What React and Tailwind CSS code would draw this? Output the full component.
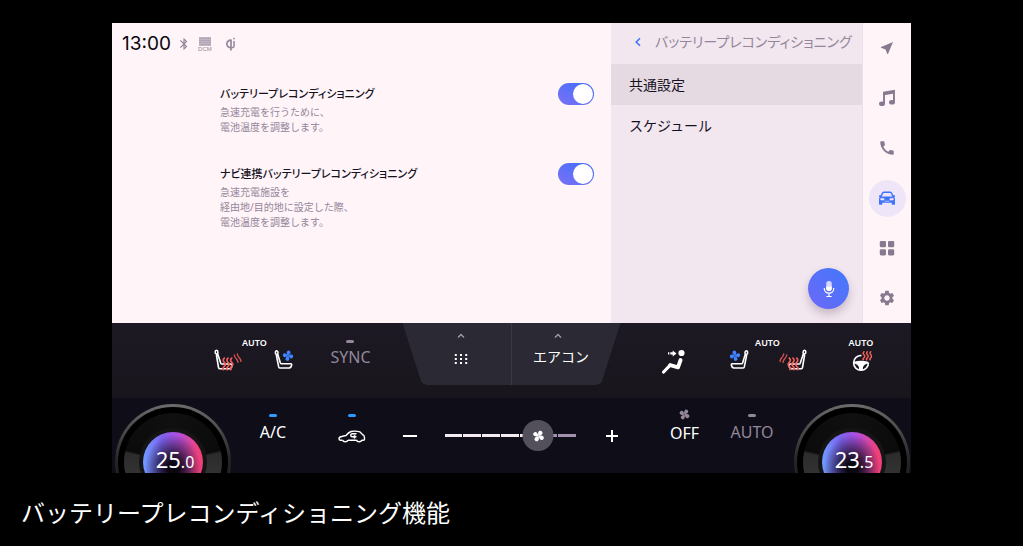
import React, { useState } from "react";
import { MdBluetooth, MdNearMe, MdCall, MdSettings } from "react-icons/md";

const JP = "font-['Noto_Sans','Noto_Sans_CJK_JP',sans-serif]";

function QiIcon() {
  return (
    <svg viewBox="0 0 12 16" className="h-4 w-3" fill="none" stroke="currentColor" aria-hidden="true">
      <path d="M6.600 4.400A3.700 3.700 0 1 0 6.800 11.400M6 4v10.500" strokeWidth="1.700" />
      <path d="M9 5v5.500c0 .6-.8 1-2 1.200" strokeWidth="1.500" />
      <circle cx="9" cy="2.600" r="0.900" fill="currentColor" stroke="none" />
    </svg>
  );
}

function SignalIcon() {
  return (
    <span className="flex w-3 flex-col items-center">
      <svg viewBox="0 0 12 9" className="h-[9px] w-3" aria-hidden="true">
        <rect width="12" height="9" fill="#c3b6c4" />
        <path d="M0 1.500h12M0 3.500h12M0 5.500h12M0 7.500h12" stroke="#aa9bad" strokeWidth="0.600" />
      </svg>
      <span className="font-['Liberation_Sans',sans-serif] text-[6px] leading-[6px] text-[#94869b]">DCM</span>
    </span>
  );
}

function MusicIcon() {
  return (
    <svg viewBox="0 0 18 18" className="size-[18px]" fill="none" aria-hidden="true">
      <path d="M6 14.500V3.500l10-1.700v11" stroke="currentColor" strokeWidth="1.900" />
      <path d="M6 5.200 16 3.500" stroke="currentColor" strokeWidth="2.200" />
      <ellipse cx="4" cy="14.800" rx="3" ry="2.300" fill="currentColor" />
      <ellipse cx="14" cy="13.200" rx="3" ry="2.300" fill="currentColor" />
    </svg>
  );
}

function CarFrontIcon() {
  return (
    <svg viewBox="0 0 18 16" className="h-4 w-[18px]" aria-hidden="true">
      <path d="M3 6.800 4.300 3.400Q4.700 2.300 5.900 2.200h6.200q1.200.1 1.600 1.200L15 6.800" fill="none" stroke="currentColor" strokeWidth="1.400" />
      <path d="M1 5.200h2v1.400h12V5.200h2v1.300l-.8.400q.8.900.8 2.100V14q0 .8-.8.800h-1.700q-.8 0-.8-.8v-1.200H4.300V14q0 .8-.8.800H1.800Q1 14.800 1 14V9q0-1.200.8-2.100L1 6.500z" fill="currentColor" />
      <path d="M2.800 8.400h2.900l.5 1.600H2.800zM15.200 8.400h-2.900l-.5 1.600h3.400zM6.400 11.200h5.200" fill="#efe5f8" stroke="#efe5f8" strokeWidth="0.600" />
    </svg>
  );
}

function GridIcon() {
  return (
    <svg viewBox="0 0 16 16" className="size-4" fill="currentColor" aria-hidden="true">
      <rect x="0.800" y="1" width="6.200" height="6.200" rx="1.300" />
      <rect x="9" y="1" width="6.200" height="6.200" rx="1.300" />
      <rect x="0.800" y="9.200" width="6.200" height="6.200" rx="1.300" />
      <rect x="9" y="9.200" width="6.200" height="6.200" rx="1.300" />
    </svg>
  );
}

function MicIcon() {
  return (
    <svg viewBox="0 0 12 18" className="h-[18px] w-3" aria-hidden="true">
      <rect x="3.200" y="1" width="5.600" height="10" rx="2.700" fill="#d6d6ff" />
      <path d="M3.200 6.500h5.600v1.800a2.800 2.800 0 0 1-5.600 0z" fill="#fff" />
      <path d="M1.300 8v.8A4.600 4.600 0 0 0 6 13.200a4.600 4.600 0 0 0 4.700-4.400V8M6 13v3.300M3.300 16.500h5.400" fill="none" stroke="#fff" strokeWidth="1.200" />
    </svg>
  );
}

function FanShapes() {
  const d = "M10 10C7.500 8.800 4.600 6.500 4.900 3.400 5.300.6 8.600-.2 10.900 1.300 13 2.900 12 6.500 10 10z";
  return (
    <>
      <path d={d} />
      <path d={d} transform="rotate(90 10 10)" />
      <path d={d} transform="rotate(180 10 10)" />
      <path d={d} transform="rotate(270 10 10)" />
    </>
  );
}

function FanBlades({ className }) {
  return (
    <svg viewBox="0 0 20 20" className={className} fill="currentColor" aria-hidden="true">
      <g transform="rotate(45 10 10)">
        <FanShapes />
      </g>
    </svg>
  );
}

function SeatHeat({ flip }) {
  return (
    <svg viewBox="0 0 28 26" className="h-[26px] w-7" fill="none" aria-hidden="true">
      <g transform={flip ? "translate(28 0) scale(-1 1)" : undefined} strokeLinecap="round" strokeLinejoin="round">
        <path d="M2.500 6Q1 5.500 1.200 4q-.1-1.600 1.200-1.700Q3.900 2.400 3.900 4.200L3.700 6l3.100 9.300q.3.700 1 .7h8.800q1.500.2 1.500 1.600-.2 2.300-2.300 3.200H6.200q-1.400 0-1.700-1.300L2.500 7.500z" stroke="#fff" strokeWidth="1.600" />
        <path d="M10.300 10.200q-2.200 2.100 0 4.100t0 4.100-.8 3.300M14 10.200q-2.200 2.100 0 4.100t0 4.100-.8 3.300M17.700 10.200q-2.200 2.100 0 4.100t0 4.100-.8 3.300" stroke="#f2605c" strokeWidth="1.700" />
        <path d="M20.300 7q.4 2.400 2 3.700 1.400 1.500 1.700 3.700M23.300 6q.4 2.400 2 3.700 1.400 1.500 1.700 3.700" stroke="#d8504f" strokeWidth="1.400" />
      </g>
    </svg>
  );
}

function SeatFan({ flip }) {
  return (
    <svg viewBox="0 0 20 22" className="h-[22px] w-5" fill="none" aria-hidden="true">
      <g transform={flip ? "translate(20 0) scale(-1 1)" : undefined}>
        <path d="M2.500 6.500Q1.200 6 1.400 4.500q-.1-1.700 1.100-1.800Q4 2.800 4 4.500L3.800 6.500l2.600 8.500q.3.700 1 .7H17q.8.300.7 1.300-.5 2.500-2.300 3H6.200Q5.100 20 4.700 18.900L2.500 8z" stroke="#fff" strokeWidth="1.600" strokeLinejoin="round" />
        <g transform="translate(8.600 2.400) scale(.54) rotate(25 10 10)" fill="#3e83ff">
          <FanShapes />
        </g>
      </g>
    </svg>
  );
}

function AirflowIcon() {
  return (
    <svg viewBox="0 0 26 26" className="size-[26px]" fill="#fff" aria-hidden="true">
      <circle cx="20.500" cy="5" r="3.100" />
      <path d="M9.300 4.300h2.400V2.400l3.800 3-3.800 3V6.600H9.300zM7 4.300h1.300v2.300H7z" />
      <path d="M19.600 12 17 19.300 9.200 17.200" fill="none" stroke="#fff" strokeWidth="3.900" strokeLinejoin="round" strokeLinecap="round" />
      <path d="M9.200 17.200 2.600 24" fill="none" stroke="#fff" strokeWidth="3.200" strokeLinecap="round" />
    </svg>
  );
}

function WheelHeat() {
  return (
    <svg viewBox="0 0 22 24" className="h-6 w-[22px]" fill="none" aria-hidden="true">
      <path d="M11.500 7.500A7.400 7.400 0 1 0 18.400 14.500" stroke="#fff" strokeWidth="1.600" />
      <path d="M3.600 13.800q7.300-2.300 14.700 0l-.3 1.800q-3.900.5-5 3.600l-.3 3H9.200l-.3-3q-1.100-3.100-5-3.600z" fill="#fff" />
      <path d="M14 3.800q-1.600 1.600 0 3t0 3-.6 2M17.400 3.800q-1.600 1.600 0 3t0 3-.6 2M20.800 3.800q-1.600 1.600 0 3t0 3-.6 2" stroke="#f2605c" strokeWidth="1.500" strokeLinecap="round" />
    </svg>
  );
}

function RecirculateIcon() {
  return (
    <svg viewBox="0 0 28 14" className="h-[14px] w-7" fill="none" stroke="#fff" strokeWidth="1.400" strokeLinejoin="round" aria-hidden="true">
      <path d="M4.500 11.200H2.200Q1 11 1 9.500 1 7.800 4.500 7.200l3.500-.7q2.400-3 5-4 4.500-1 9 .4l3 3q1.500.7 1.500 2.800v1.700q-.3.800-1.500.8h-1.300M10 11.200h8.500" />
      <path d="M4.600 11a2.700 2.100 0 0 0 5.300 0M18.500 11a2.700 2.100 0 0 0 5.300 0" strokeWidth="1.400" />
      <path d="M18.500 4.700h-4.400q-1.400.2-1.400 1.500t1.400 1.600h3" />
      <path d="m16 6 2.600 1.800L16 9.600z" fill="#fff" strokeWidth="0.500" />
    </svg>
  );
}

function ChevronUp() {
  return (
    <svg viewBox="0 0 8 6" className="h-1.5 w-2" fill="none" stroke="#a99ab0" strokeWidth="1.300" aria-hidden="true">
      <path d="M1 4.500 4 1.500 7 4.500" />
    </svg>
  );
}

function Setting({ id, title, lines }) {
  const [on, setOn] = useState(true);
  return (
    <div className="flex items-start justify-between">
      <div>
        <label htmlFor={id} className="block text-[11px] leading-[22px] font-medium whitespace-nowrap text-[#15121f] [font-feature-settings:'palt']">
          {title}
        </label>
        <p className="text-[10px] leading-[15px] text-[#94869b]">
          {lines.map((line) => (
            <span key={line} className="block">{line}</span>
          ))}
        </p>
      </div>
      <input
        id={id}
        type="checkbox"
        role="switch"
        checked={on}
        onChange={() => setOn(!on)}
        className="flex h-[22px] w-9 cursor-pointer appearance-none rounded-full bg-[#b9afbd] p-px before:size-5 before:rounded-full before:bg-white checked:justify-end checked:bg-linear-to-tr checked:from-[#7a70f4] checked:to-[#356ffc]"
      />
    </div>
  );
}

const RAIL = [
  { label: "ナビ", icon: <MdNearMe className="size-4" /> },
  { label: "オーディオ", icon: <MusicIcon /> },
  { label: "電話", icon: <MdCall className="size-[18px]" /> },
  { label: "車両", icon: <CarFrontIcon />, active: true },
  { label: "アプリ", icon: <GridIcon /> },
  { label: "設定", icon: <MdSettings className="size-[18px]" /> },
];

function Display() {
  return (
    <div className="flex h-[300px] bg-[#fff4f7]">
      <main className="min-w-0 flex-1">
        <div className="mt-3 flex h-[18px] items-center pl-2.5 text-[#94869b]">
          <time className="font-['Inter',sans-serif] text-[19px] leading-[18px] text-[#08060f]">13:00</time>
          <span className="ml-1.5 flex items-center gap-2">
            <MdBluetooth className="size-[14px]" />
            <SignalIcon />
            <span className="ml-1.5"><QiIcon /></span>
          </span>
        </div>
        <div className="mt-[30px] flex flex-col gap-7 pr-[17px] pl-[108px]">
          <Setting id="battery" title="バッテリープレコンディショニング" lines={["急速充電を行うために、", "電池温度を調整します。"]} />
          <Setting id="navi" title="ナビ連携バッテリープレコンディショニング" lines={["急速充電施設を", "経由地/目的地に設定した際、", "電池温度を調整します。"]} />
        </div>
      </main>
      <aside className="flex w-[251px] flex-col bg-[#f2e6ef]">
        <header className="flex h-[41px] items-center gap-3 pb-1 pl-[22px]">
          <button type="button" aria-label="戻る" className="flex size-[10px] items-center justify-center text-[#3f74fb]">
            <svg viewBox="0 0 8 10" className="h-2.5 w-2" fill="none" stroke="currentColor" strokeWidth="1.600" aria-hidden="true">
              <path d="M6 1.200 2.200 5 6 8.800" />
            </svg>
          </button>
          <h1 className="text-[14px] leading-5 whitespace-nowrap text-[#94869b] [font-feature-settings:'palt']">バッテリープレコンディショニング</h1>
        </header>
        <nav className="flex flex-col text-[14px] leading-5 text-[#15121f]">
          <button type="button" aria-current="page" className="h-[41px] bg-[#e5d9e2] pl-[18px] text-left">共通設定</button>
          <button type="button" className="h-[41px] pl-[18px] text-left">スケジュール</button>
        </nav>
        <button type="button" aria-label="音声操作" className="mt-auto mr-[13px] mb-[14px] flex size-[41px] items-center justify-center self-end rounded-full bg-linear-to-tr from-[#6a68f8] to-[#3f78fb] shadow-[0_5px_8px_rgba(90,70,90,0.28)]">
          <MicIcon />
        </button>
      </aside>
      <nav className="grid w-[49px] grid-rows-6 border-l border-[#ece0ea] text-[#877a90]">
        {RAIL.map((item) => (
          <button
            key={item.label}
            type="button"
            aria-label={item.label}
            className={item.active ? "flex size-[37px] items-center justify-center place-self-center rounded-full bg-[#efe5f8] text-[#3f74fb]" : "flex size-[37px] items-center justify-center place-self-center"}
          >
            {item.icon}
          </button>
        ))}
      </nav>
    </div>
  );
}

function AutoLabel() {
  return <span className="text-[9px] leading-[10px] font-semibold text-white">AUTO</span>;
}

function ClimateTabs() {
  return (
    <div className="grid h-[62px] grid-cols-2 bg-[#2b2934] [clip-path:polygon(0_0,100%_0,91.500%_94%,90.500%_98%,88.500%_100%,11.500%_100%,9.500%_98%,8.500%_94%)]">
      <button type="button" aria-label="メニュー" className="flex flex-col items-center border-r border-[#3b3845] pt-2.5 pl-2">
        <ChevronUp />
        <svg viewBox="0 0 14 10" className="mt-[15px] h-2.5 w-[14px]" fill="#fff" aria-hidden="true">
          <path d="M.8 0h2v2h-2zM6 0h2v2H6zM11.200 0h2v2h-2zM.8 4h2v2h-2zM6 4h2v2H6zM11.200 4h2v2h-2zM.8 8h2v2h-2zM6 8h2v2H6zM11.200 8h2v2h-2z" />
        </svg>
      </button>
      <button type="button" className="flex flex-col items-center pt-2.5 pr-4 text-white">
        <ChevronUp />
        <span className="mt-2 pl-1.5 text-[14px] leading-5">エアコン</span>
      </button>
    </div>
  );
}

function UpperControls() {
  return (
    <div className="grid h-[75px] grid-cols-[1fr_218px_1fr] bg-linear-to-b from-[#1c1924] to-[#18151c]">
      <div className="flex items-start justify-end gap-9 pt-[15px] pr-8">
        <div className="flex w-20 flex-col items-center">
          <AutoLabel />
          <div className="flex w-full items-start justify-between">
            <button type="button" aria-label="運転席シートヒーター"><SeatHeat /></button>
            <button type="button" aria-label="運転席ベンチレーション"><SeatFan /></button>
          </div>
        </div>
        <button type="button" className="flex flex-col items-center text-[#94869b]">
          <span className="mt-0.5 h-[3px] w-2 rounded-full bg-[#94869b]" />
          <span className="mt-1 text-[16px] leading-5">SYNC</span>
        </button>
      </div>
      <ClimateTabs />
      <div className="flex items-start gap-[42px] pt-[15px] pl-10">
        <button type="button" aria-label="送風モード" className="mt-2.5"><AirflowIcon /></button>
        <div className="flex w-[78px] flex-col items-center">
          <AutoLabel />
          <div className="flex w-full items-start justify-between">
            <button type="button" aria-label="助手席ベンチレーション"><SeatFan flip /></button>
            <button type="button" aria-label="助手席シートヒーター"><SeatHeat flip /></button>
          </div>
        </div>
        <button type="button" aria-label="ステアリングヒーター AUTO" className="flex flex-col items-center">
          <AutoLabel />
          <WheelHeat />
        </button>
      </div>
    </div>
  );
}

function Dial({ whole, tenth }) {
  return (
    <div className="h-[69px] w-[116px] shrink-0 self-end overflow-hidden">
      <div className="flex size-[116px] items-center justify-center rounded-full bg-linear-to-b from-[#6c6c6c] via-[#242424] to-[#1c1c1c] p-[3px]">
        <div className="flex size-full items-center justify-center rounded-full bg-black p-[6px]">
          <div className="flex size-full items-center justify-center rounded-full bg-[conic-gradient(from_0deg,#101010_0deg,#0b0b0b_76deg,#2c2c2c_79deg,#333_110deg,#333_250deg,#2c2c2c_281deg,#0b0b0b_284deg,#101010_360deg)]">
            <div className="flex size-[68px] items-center justify-center rounded-full bg-[#151515] p-1">
              <div className="flex size-full items-start justify-center rounded-full bg-[radial-gradient(ellipse_at_50%_62%,#0b0710_12%,rgba(11,7,16,0.700)_30%,transparent_66%),linear-gradient(90deg,#6f9cff_0%,#7d62f0_32%,#b04fe0_58%,#f0407c_92%)] pt-4 pl-1">
                <output className="flex items-baseline text-[22px] leading-[22px] text-white">
                  {whole}
                  <span className="text-[16px] leading-[18px]">.{tenth}</span>
                </output>
              </div>
            </div>
          </div>
        </div>
      </div>
    </div>
  );
}

function FanSlider() {
  const [level, setLevel] = useState(5);
  const pct = (level / 7) * 100;
  return (
    <div className="relative flex h-[31px] w-[131px] items-center">
      <div className="grid w-full grid-cols-7 gap-px">
        {[1, 2, 3, 4, 5, 6, 7].map((n) => (
          <span key={n} className={n <= level ? "h-[3px] bg-[#f4ebf1]" : "h-[3px] bg-[#a292ad]"} />
        ))}
      </div>
      <span className="absolute flex size-[31px] -translate-x-1/2 items-center justify-center rounded-full bg-[#53505c] text-white" style={{ left: `${pct}%` }}>
        <FanBlades className="size-3" />
      </span>
      <input type="range" min="0" max="7" value={level} onChange={(e) => setLevel(Number(e.target.value))} aria-label="風量" className="absolute inset-0 size-full cursor-pointer opacity-0" />
    </div>
  );
}

function LowerControls() {
  return (
    <div className="flex h-[75px] justify-between bg-[#0e0d18] pr-px pl-[3px] text-white">
      <div className="flex items-start">
        <Dial whole="25" tenth="0" />
        <button type="button" className="mt-4 ml-7 flex w-7 flex-col items-center">
          <span className="h-[3px] w-2 rounded-full bg-[#2f9bff]" />
          <span className="mt-[5px] text-[16px] leading-5">A/C</span>
        </button>
        <button type="button" aria-label="内気循環" className="mt-4 ml-[51px] flex flex-col items-center">
          <span className="mb-3 h-[3px] w-2 rounded-full bg-[#2f9bff]" />
          <RecirculateIcon />
        </button>
      </div>
      <div className="mt-[22px] mr-4 flex h-[31px] items-center gap-7">
        <button type="button" aria-label="風量を下げる" className="flex h-5 w-[14px] items-center">
          <span className="h-0.5 w-full bg-white" />
        </button>
        <FanSlider />
        <button type="button" aria-label="風量を上げる" className="ml-0.5">
          <svg viewBox="0 0 12 12" className="size-3" stroke="#fff" strokeWidth="2" aria-hidden="true">
            <path d="M6 0v12M0 6h12" />
          </svg>
        </button>
      </div>
      <div className="flex items-start">
        <button type="button" className="mt-[11px] flex w-[29px] flex-col items-center">
          <span className="text-[#94869b]"><FanBlades className="size-[11px]" /></span>
          <span className="mt-[3px] text-[16px] leading-5">OFF</span>
        </button>
        <button type="button" className="mt-4 mr-[21px] ml-8 flex w-[42px] flex-col items-center text-[#94869b]">
          <span className="h-[3px] w-2 rounded-full bg-[#94869b]" />
          <span className="mt-[5px] text-[16px] leading-5">AUTO</span>
        </button>
        <Dial whole="23" tenth="5" />
      </div>
    </div>
  );
}

export default function App() {
  return (
    <div className={`min-h-screen bg-black pt-[23px] ${JP}`}>
      <section className="mx-28" aria-label="車載ディスプレイ">
        <Display />
        <UpperControls />
        <LowerControls />
      </section>
      <p className="mt-5 px-[21px] pb-3 text-[24px] leading-10 text-white">バッテリープレコンディショニング機能</p>
    </div>
  );
}
